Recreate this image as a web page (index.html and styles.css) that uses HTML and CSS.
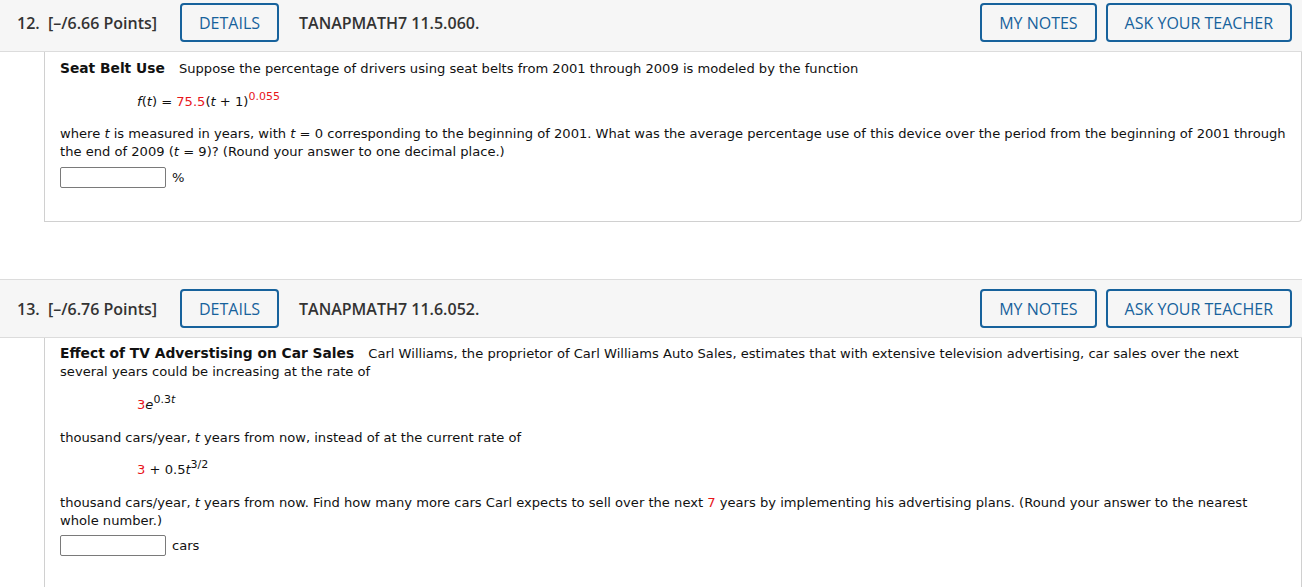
FILE: index.html
```html
<!DOCTYPE html>
<html>
<head>
<meta charset="utf-8">
<link rel="stylesheet" href="styles.css">
</head>
<body>
<div class="page">
  <div class="question first">
    <div class="qhead">
      <span class="num">12.</span>
      <span class="pts">[–/6.66 Points]</span>
      <span class="btn">DETAILS</span>
      <span class="code">TANAPMATH7 11.5.060.</span>
      <span class="spacer"></span>
      <span class="btn">MY NOTES</span>
      <span class="btn">ASK YOUR TEACHER</span>
    </div>
    <div class="qbody b12">
      <p class="line"><b class="title">Seat Belt Use</b> Suppose the percentage of drivers using seat belts from 2001 through 2009 is modeled by the function</p>
      <p class="formula f1"><i>f</i>(<i>t</i>) = <span class="red">75.5</span>(<i>t</i> + 1)<sup class="red">0.055</sup></p>
      <p class="line">where <i>t</i> is measured in years, with <i>t</i> = 0 corresponding to the beginning of 2001. What was the average percentage use of this device over the period from the beginning of 2001 through the end of 2009 (<i>t</i> = 9)? (Round your answer to one decimal place.)</p>
      <div class="answer a1"><span class="box"></span><span class="unit">%</span></div>
    </div>
  </div>

  <div class="question second">
    <div class="qhead">
      <span class="num">13.</span>
      <span class="pts">[–/6.76 Points]</span>
      <span class="btn">DETAILS</span>
      <span class="code">TANAPMATH7 11.6.052.</span>
      <span class="spacer"></span>
      <span class="btn">MY NOTES</span>
      <span class="btn">ASK YOUR TEACHER</span>
    </div>
    <div class="qbody b13">
      <p class="line"><b class="title">Effect of TV Adverstising on Car Sales</b> Carl Williams, the proprietor of Carl Williams Auto Sales, estimates that with extensive television advertising, car sales over the next several years could be increasing at the rate of</p>
      <p class="formula f2"><span class="red">3</span><i>e</i><sup>0.3<i>t</i></sup></p>
      <p class="line">thousand cars/year, <i>t</i> years from now, instead of at the current rate of</p>
      <p class="formula f3"><span class="red">3</span> + 0.5<i>t</i><sup>3/2</sup></p>
      <p class="line">thousand cars/year, <i>t</i> years from now. Find how many more cars Carl expects to sell over the next <span class="red">7</span> years by implementing his advertising plans. (Round your answer to the nearest whole number.)</p>
      <div class="answer"><span class="box"></span><span class="unit">cars</span></div>
    </div>
  </div>
</div>
</body>
</html>
```

FILE: styles.css
```css
html, body {
  margin: 0;
  padding: 0;
  background: #fff;
  overflow: hidden;
}
.page {
  width: 1302px;
}
.question.first {
  margin-top: -7px;
}
.question.second {
  margin-top: 57px;
}
.qhead {
  display: flex;
  align-items: center;
  background: #f6f6f6;
  border-top: 1px solid #dcdcdc;
  border-bottom: 1px solid #dcdcdc;
  padding: 9px 10px 9px 17px;
  font-family: "Open Sans", sans-serif;
  font-size: 16px;
  font-weight: 600;
  color: #333;
}
.num {
  width: 31px;
}
.pts {
  width: 132px;
}
.btn {
  box-sizing: border-box;
  height: 39px;
  display: inline-flex;
  align-items: center;
  padding: 0 17px;
  border: 2px solid #17629c;
  border-radius: 4px;
  color: #17629c;
  font-weight: 500;
  background: #f6f6f6;
}
.code {
  margin-left: 20px;
}
.spacer {
  flex: 1;
}
.btn + .btn {
  margin-left: 9px;
}
.qbody {
  margin-left: 44px;
  border-left: 1px solid #d0d0d0;
  border-right: 1px solid #d0d0d0;
  padding: 7px 13px 0 15px;
  font-family: "DejaVu Sans", Verdana, sans-serif;
  font-size: 13.1px;
  line-height: 18px;
  color: #111;
}
.b12 {
  border-bottom: 1px solid #d0d0d0;
  border-bottom-right-radius: 4px;
  height: 170px;
  box-sizing: border-box;
}
.b13 {
  height: 260px;
  padding-top: 6px;
}
.qbody p {
  margin: 0;
}
.title {
  font-size: 13.8px;
  margin-right: 10px;
}
.formula {
  padding-left: 77px;
}
.formula sup {
  font-size: 11px;
  vertical-align: 6px;
  line-height: 0;
}
.f1 {
  margin: 15px 0 14px !important;
}
.f2 {
  margin: 15px 0 15px !important;
}
.f3 {
  margin: 14px 0 15px !important;
}
.red {
  color: #e8161b;
}
.answer {
  display: flex;
  align-items: center;
  margin-top: 5px;
}
.answer.a1 {
  margin-top: 6px;
}
.box {
  display: inline-block;
  width: 104px;
  height: 19px;
  border: 1px solid #7a7a7a;
  border-radius: 2px;
  background: #fff;
}
.unit {
  margin-left: 6px;
}
```
